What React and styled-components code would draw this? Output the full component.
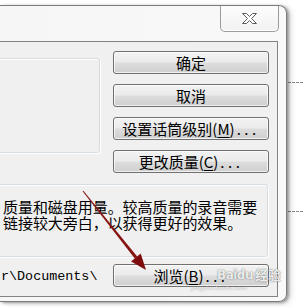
import React from "react";
import styled, { createGlobalStyle } from "styled-components";

const GlobalStyle = createGlobalStyle`
  html, body {
    margin: 0;
    padding: 0;
    background: #ffffff;
    overflow: hidden;
  }
  body {
    font-family: "Noto Sans CJK SC", "DejaVu Sans", sans-serif;
    color: #000;
  }
`;

const Page = styled.div`
  position: relative;
  width: 303px;
  height: 307px;
  padding-top: 5px;
  box-sizing: border-box;
  overflow: hidden;
`;

const Dash = styled.div`
  position: absolute;
  left: 288px;
  right: 0;
  top: ${(p) => p.$top}px;
  border-top: 1px dashed #8a8a8a;
`;

const Window = styled.div`
  position: relative;
  width: 286px;
  padding-bottom: 4px;
  background: linear-gradient(90deg, #f6f6f6, #f9f9f9);
  border: 1px solid #7b7b7b;
  border-left: none;
  border-radius: 0 8px 8px 0;
  box-shadow: 2px 1px 3px rgba(0, 0, 0, 0.35), 4px 2px 6px rgba(0, 0, 0, 0.12);
`;

const TitleBar = styled.div`
  height: 35px;
  display: flex;
  justify-content: flex-end;
  align-items: flex-start;
  padding-right: 7px;
`;

const CloseButton = styled.div`
  width: 57px;
  height: 25px;
  display: flex;
  align-items: center;
  justify-content: center;
  border: 1px solid #9c9c9c;
  border-top: none;
  border-radius: 0 0 5px 5px;
  background: linear-gradient(#fdfdfd, #f1f1f1);
  box-shadow: inset 0 -1px 0 #ffffff;
`;

const Panel = styled.div`
  margin-right: 8px;
  background: #f0f0f0;
  border: 1px solid #838383;
  border-left: none;
  padding: 9px 8px 9px 0;
  display: flex;
  flex-direction: column;
`;

const TopSection = styled.div`
  display: flex;
  align-items: flex-start;
  gap: 13px;
`;

const GroupBox = styled.div`
  box-sizing: border-box;
  border: 1px solid #d5dde3;
  border-radius: 3px;
  box-shadow: inset 1px 1px 0 #ffffff, 1px 1px 0 #ffffff;
`;

const PreviewBox = styled(GroupBox)`
  margin-top: 7px;
  margin-left: -6px;
  width: 106px;
  height: 95px;
`;

const ButtonColumn = styled.div`
  display: flex;
  flex-direction: column;
  gap: 10px;
  width: 156px;
`;

const Button = styled.div`
  position: relative;
  box-sizing: border-box;
  width: 156px;
  height: 23px;
  display: flex;
  align-items: center;
  justify-content: center;
  border: 1px solid #707070;
  border-radius: 3px;
  background: linear-gradient(#f2f2f2 0%, #ebebeb 48%, #dddddd 52%, #cfcfcf 100%);
  box-shadow: inset 0 0 0 1px rgba(255, 255, 255, 0.7);
  font-size: 15px;
  line-height: 1;
  color: #000;
  white-space: nowrap;
`;

const Key = styled.span`
  text-decoration: underline;
  text-underline-offset: 2px;
`;

const Dots = styled.span`
  letter-spacing: 3.5px;
  margin-left: 2px;
`;

const InfoBox = styled(GroupBox)`
  margin-top: 11px;
  margin-left: -6px;
  margin-right: 1px;
  height: 73px;
  padding: 14px 0 0 8px;
  font-size: 15px;
  line-height: 16px;
`;

const InfoLine = styled.div`
  white-space: nowrap;
  letter-spacing: -0.05px;
`;

const PathRow = styled.div`
  margin-top: 7px;
  display: flex;
  align-items: center;
  justify-content: space-between;
`;

const PathText = styled.div`
  font-family: "Liberation Mono", "DejaVu Sans Mono", monospace;
  font-size: 13.4px;
  padding-left: 1px;
  padding-top: 2px;
  white-space: nowrap;
`;

const Overlay = styled.svg`
  position: absolute;
  left: 0;
  top: 0;
  pointer-events: none;
`;

const Watermark = styled.div`
  position: absolute;
  left: 103px;
  top: -4px;
  width: 62px;
  pointer-events: none;
  line-height: 1;
`;

const MarkMain = styled.div`
  display: flex;
  align-items: flex-end;
  height: 20px;
  font-family: "DejaVu Sans", sans-serif;
  font-weight: bold;
  color: rgba(255, 255, 255, 0.9);
  text-shadow: 0 0 1px rgba(0, 0, 0, 0.5), 0 0 2px rgba(0, 0, 0, 0.25);
`;

const MarkLatin = styled.span`
  font-size: 12px;
  letter-spacing: -0.5px;
`;

const MarkCjk = styled.span`
  font-family: "Noto Sans CJK SC", sans-serif;
  font-size: 13px;
  margin-left: 2px;
`;

const MarkSite = styled.div`
  font-family: "DejaVu Serif", serif;
  font-size: 6px;
  color: rgba(255, 255, 255, 0.9);
  text-shadow: 0 0 1px rgba(0, 0, 0, 0.45);
  margin-top: 4px;
  margin-left: -26px;
  white-space: nowrap;
`;

function CloseGlyph() {
  return (
    <svg width="17" height="13" viewBox="0 0 17 13">
      <path
        d="M1.5 1.5 H5.5 L8.5 4.5 L11.5 1.5 H15.5 L10.5 6.5 L15.5 11.5 H11.5 L8.5 8.5 L5.5 11.5 H1.5 L6.5 6.5 Z"
        fill="#ffffff"
        stroke="#5c5c5c"
        strokeWidth="1"
        strokeLinejoin="round"
      />
    </svg>
  );
}

function Arrow() {
  return (
    <Overlay width="303" height="307" viewBox="0 0 303 307">
      <polygon
        points="82.6,191.3 83.4,190.7 137.2,256.6 134.8,258.6"
        fill="#871212"
      />
      <polygon points="146,270 140.7,253.6 131.1,261.4" fill="#7e0c0c" />
    </Overlay>
  );
}

function Paw() {
  return (
    <svg width="11" height="11" viewBox="0 0 14 14" style={{ margin: "0 0 5px 0" }}>
      <g fill="rgba(255,255,255,0.9)" stroke="rgba(0,0,0,0.35)" strokeWidth="0.9">
        <ellipse cx="3" cy="5" rx="1.6" ry="2" />
        <ellipse cx="6" cy="2.5" rx="1.6" ry="2" />
        <ellipse cx="9.5" cy="2.5" rx="1.6" ry="2" />
        <ellipse cx="12" cy="5" rx="1.5" ry="2" />
        <ellipse cx="7.5" cy="9.5" rx="4" ry="3.5" />
      </g>
    </svg>
  );
}

export default function App() {
  return (
    <Page>
      <GlobalStyle />
      <Dash $top={82} />
      <Dash $top={211} />
      <Window>
        <TitleBar>
          <CloseButton>
            <CloseGlyph />
          </CloseButton>
        </TitleBar>
        <Panel>
          <TopSection>
            <PreviewBox />
            <ButtonColumn>
              <Button>确定</Button>
              <Button>取消</Button>
              <Button>
                设置话筒级别(<Key>M</Key>)<Dots>...</Dots>
              </Button>
              <Button>
                更改质量(<Key>C</Key>)<Dots>...</Dots>
              </Button>
            </ButtonColumn>
          </TopSection>
          <InfoBox>
            <InfoLine>质量和磁盘用量。较高质量的录音需要</InfoLine>
            <InfoLine>链接较大旁白，以获得更好的效果。</InfoLine>
          </InfoBox>
          <PathRow>
            <PathText>r\Documents\</PathText>
            <Button>
              浏览(<Key>B</Key>)<Dots>...</Dots>
              <Watermark>
                <MarkMain>
                  <MarkLatin>Bai</MarkLatin>
                  <Paw />
                  <MarkLatin>du</MarkLatin>
                  <MarkCjk>经验</MarkCjk>
                </MarkMain>
                <MarkSite>jingyan.baidu.com</MarkSite>
              </Watermark>
            </Button>
          </PathRow>
        </Panel>
      </Window>
      <Arrow />
    </Page>
  );
}
